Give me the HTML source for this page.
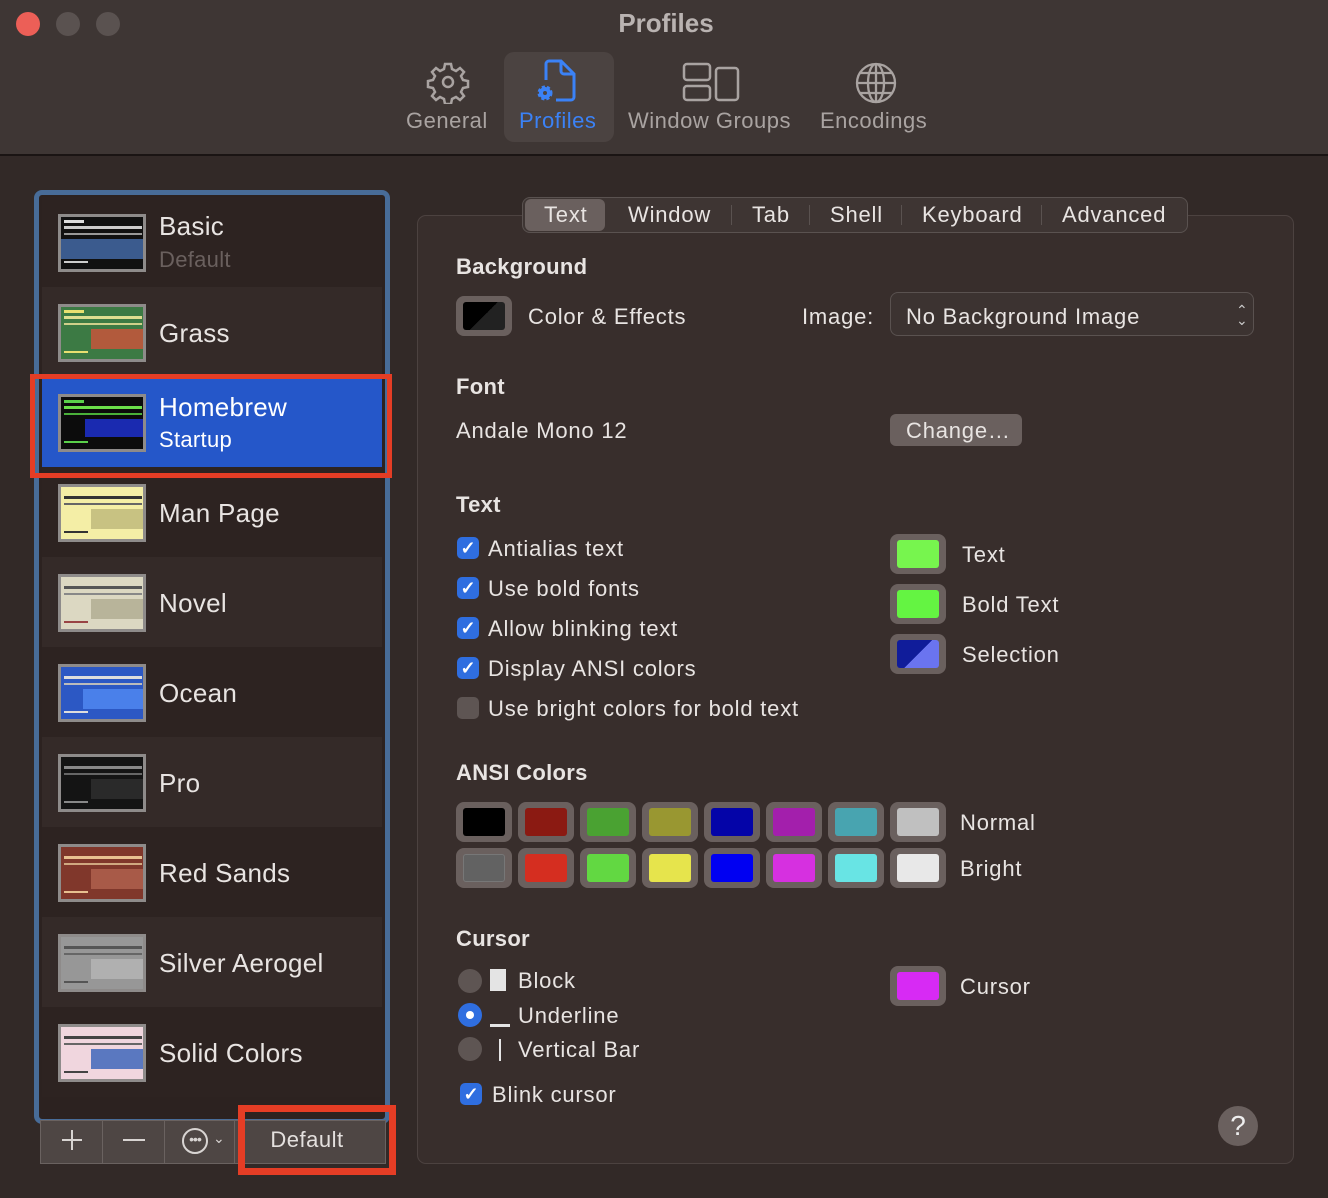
<!DOCTYPE html>
<html><head><meta charset="utf-8"><style>
*{margin:0;padding:0;box-sizing:border-box}
body{width:1328px;height:1198px;background:#322927;font-family:"Liberation Sans",sans-serif;position:relative;overflow:hidden;color:#e6e2e0}
.a{position:absolute}
.title{background:#3e3634;left:0;top:0;width:1328px;height:156px;border-bottom:2px solid #1a1413}
.tb{color:#a9a3a1;font-size:22px;letter-spacing:0.5px}
.row{position:absolute;left:42px;width:340px;height:90px}
.th{position:absolute;left:16px;top:17px;width:88px;height:58px;border:3px solid #8e8b8a;overflow:hidden}
.th i{position:absolute;display:block}
.nm{position:absolute;left:117px;font-size:26px;color:#e8e4e2;letter-spacing:0.3px}
.h{font-weight:bold;font-size:22px;color:#e8e4e2;letter-spacing:0.3px}
.t22{font-size:22px;color:#e8e4e2;letter-spacing:0.8px}
.cb{position:absolute;width:22px;height:22px;border-radius:5px;background:#2f6ee0;color:#fff;font-size:18px;text-align:center;line-height:22px;font-weight:bold}
.sw{position:absolute;width:56px;height:40px;border-radius:8px;background:#6a605e;padding:6px 7px}
.sw div{width:100%;height:100%;border-radius:3px}
.rad{position:absolute;width:24px;height:24px;border-radius:50%;background:#5e5553}
</style></head><body>
<div class="a title"></div>
<div class="a" style="left:16px;top:12px;width:24px;height:24px;border-radius:50%;background:#ec5f57"></div>
<div class="a" style="left:56px;top:12px;width:24px;height:24px;border-radius:50%;background:#5a5250"></div>
<div class="a" style="left:96px;top:12px;width:24px;height:24px;border-radius:50%;background:#5a5250"></div>
<div class="a" style="left:0;top:8px;width:1332px;text-align:center;font-weight:bold;font-size:26px;color:#b9b3b1">Profiles</div>
<div class="a" style="left:504px;top:52px;width:110px;height:90px;border-radius:10px;background:#4b4341"></div>
<svg class="a" style="left:426px;top:60px" width="44" height="44" viewBox="0 0 44 44" fill="none" stroke="#a9a3a1" stroke-width="2.5"><path d="M19 4h6l1 5 4 2 4-3 4 4-3 4 2 4 5 1v6l-5 1-2 4 3 4-4 4-4-3-4 2-1 5h-6l-1-5-4-2-4 3-4-4 3-4-2-4-5-1v-6l5-1 2-4-3-4 4-4 4 3 4-2z"/><circle cx="22" cy="22" r="5"/></svg>
<svg class="a" style="left:532px;top:58px" width="48" height="48" viewBox="0 0 48 48" fill="none" stroke="#3b82f6" stroke-width="3"><path d="M14 22V6a3 3 0 0 1 3-3h12l13 13v23a3 3 0 0 1-3 3H24"/><path d="M29 3v10a3 3 0 0 0 3 3h10"/><circle cx="13" cy="35" r="6" fill="#3b82f6" stroke-width="3" stroke-dasharray="3 2"/><circle cx="13" cy="35" r="2" fill="#4b4341" stroke="none"/></svg>
<svg class="a" style="left:682px;top:62px" width="58" height="40" viewBox="0 0 58 40" fill="none" stroke="#a9a3a1" stroke-width="2.5"><rect x="2" y="2" width="26" height="16" rx="3"/><rect x="2" y="24" width="26" height="14" rx="3"/><rect x="34" y="6" width="22" height="32" rx="3"/></svg>
<svg class="a" style="left:854px;top:61px" width="44" height="44" viewBox="0 0 44 44" fill="none" stroke="#a9a3a1" stroke-width="2.3"><circle cx="22" cy="22" r="19"/><ellipse cx="22" cy="22" rx="8" ry="19"/><path d="M22 3v38M3 22h38M6 12h32M6 32h32"/></svg>
<div class="a tb" style="left:406px;top:108px">General</div>
<div class="a tb" style="left:519px;top:108px;color:#3b82f6">Profiles</div>
<div class="a tb" style="left:628px;top:108px">Window Groups</div>
<div class="a tb" style="left:820px;top:108px">Encodings</div>

<!-- list -->
<div class="a" style="left:34px;top:190px;width:356px;height:934px;border:5px solid #486c98;border-radius:8px;background:#2c2220"></div>
<div class="row" style="top:197px;background:#2d2321"><div class="th" style="background:#111"><i style="left:0;top:22px;width:82px;height:20px;background:#3b5b8e"></i><i style="left:3px;top:3px;width:20px;height:3px;background:#ddd"></i><i style="left:3px;top:9px;width:78px;height:3px;background:#ccc"></i><i style="left:3px;top:16px;width:78px;height:2px;background:#999"></i><i style="left:3px;top:44px;width:24px;height:2px;background:#ccc"></i></div><div class="nm" style="top:14px">Basic</div><div class="nm" style="top:50px;font-size:22px;color:#6a605e">Default</div></div>
<div class="row" style="top:287px;background:#342a28"><div class="th" style="background:#3c7a44"><i style="left:30px;top:22px;width:52px;height:20px;background:#b25a3c"></i><i style="left:3px;top:3px;width:20px;height:3px;background:#e8e070"></i><i style="left:3px;top:9px;width:78px;height:3px;background:#dede90"></i><i style="left:3px;top:16px;width:78px;height:2px;background:#cfd08a"></i><i style="left:3px;top:44px;width:24px;height:2px;background:#e8e070"></i></div><div class="nm" style="top:31px">Grass</div></div>
<div class="row" style="top:377px;background:#2557c9"><div class="th" style="background:#0c0c0c"><i style="left:24px;top:22px;width:58px;height:18px;background:#1a2ab0"></i><i style="left:3px;top:3px;width:20px;height:3px;background:#5ad04a"></i><i style="left:3px;top:9px;width:78px;height:3px;background:#6be04a"></i><i style="left:3px;top:16px;width:78px;height:2px;background:#4ab03a"></i><i style="left:3px;top:44px;width:24px;height:2px;background:#5ad04a"></i></div><div class="nm" style="top:15px;color:#fff">Homebrew</div><div class="nm" style="top:50px;font-size:22px;color:#fff">Startup</div></div>
<div class="row" style="top:467px;background:#2d2321"><div class="th" style="background:#f4eea6"><i style="left:30px;top:22px;width:52px;height:20px;background:#c8c282"></i><i style="left:3px;top:9px;width:78px;height:3px;background:#333"></i><i style="left:3px;top:16px;width:78px;height:2px;background:#666"></i><i style="left:3px;top:44px;width:24px;height:2px;background:#333"></i></div><div class="nm" style="top:31px">Man Page</div></div>
<div class="row" style="top:557px;background:#342a28"><div class="th" style="background:#dcd8c2"><i style="left:30px;top:22px;width:52px;height:20px;background:#b8b49a"></i><i style="left:3px;top:9px;width:78px;height:3px;background:#555"></i><i style="left:3px;top:16px;width:78px;height:2px;background:#888"></i><i style="left:3px;top:44px;width:24px;height:2px;background:#944"></i></div><div class="nm" style="top:31px">Novel</div></div>
<div class="row" style="top:647px;background:#2d2321"><div class="th" style="background:#2c58c4"><i style="left:22px;top:22px;width:60px;height:20px;background:#4a80ea"></i><i style="left:3px;top:9px;width:78px;height:3px;background:#ddd"></i><i style="left:3px;top:16px;width:78px;height:2px;background:#bbb"></i><i style="left:3px;top:44px;width:24px;height:2px;background:#ddd"></i></div><div class="nm" style="top:31px">Ocean</div></div>
<div class="row" style="top:737px;background:#342a28"><div class="th" style="background:#141414"><i style="left:30px;top:22px;width:52px;height:20px;background:#2a2a2a"></i><i style="left:3px;top:9px;width:78px;height:3px;background:#888"></i><i style="left:3px;top:16px;width:78px;height:2px;background:#666"></i><i style="left:3px;top:44px;width:24px;height:2px;background:#888"></i></div><div class="nm" style="top:31px">Pro</div></div>
<div class="row" style="top:827px;background:#2d2321"><div class="th" style="background:#80372b"><i style="left:30px;top:22px;width:52px;height:20px;background:#a85a48"></i><i style="left:3px;top:9px;width:78px;height:3px;background:#e8c090"></i><i style="left:3px;top:16px;width:78px;height:2px;background:#d0a880"></i><i style="left:3px;top:44px;width:24px;height:2px;background:#e8c090"></i></div><div class="nm" style="top:31px">Red Sands</div></div>
<div class="row" style="top:917px;background:#342a28"><div class="th" style="background:#979797"><i style="left:30px;top:22px;width:52px;height:20px;background:#b0b0b0"></i><i style="left:3px;top:9px;width:78px;height:3px;background:#555"></i><i style="left:3px;top:16px;width:78px;height:2px;background:#666"></i><i style="left:3px;top:44px;width:24px;height:2px;background:#555"></i></div><div class="nm" style="top:31px">Silver Aerogel</div></div>
<div class="row" style="top:1007px;background:#2d2321"><div class="th" style="background:#f0d6de"><i style="left:30px;top:22px;width:52px;height:20px;background:#5a78c0"></i><i style="left:3px;top:9px;width:78px;height:3px;background:#444"></i><i style="left:3px;top:16px;width:78px;height:2px;background:#666"></i><i style="left:3px;top:44px;width:24px;height:2px;background:#444"></i></div><div class="nm" style="top:31px">Solid Colors</div></div>
<div class="a" style="left:30px;top:374px;width:362px;height:104px;border:5px solid #e53d25"></div>

<!-- bottom bar -->
<div class="a" style="left:40px;top:1120px;width:346px;height:44px;background:#4e4644;border:1px solid #6a6260"></div>
<div class="a" style="left:102px;top:1120px;width:1px;height:44px;background:#6a6260"></div>
<div class="a" style="left:164px;top:1120px;width:1px;height:44px;background:#6a6260"></div>
<div class="a" style="left:234px;top:1120px;width:1px;height:44px;background:#6a6260"></div>
<div class="a" style="left:62px;top:1139px;width:20px;height:2px;background:#d8d4d2"></div>
<div class="a" style="left:71px;top:1130px;width:2px;height:20px;background:#d8d4d2"></div>
<div class="a" style="left:123px;top:1139px;width:22px;height:2px;background:#d8d4d2"></div>
<div class="a" style="left:182px;top:1128px;width:26px;height:26px;border:2px solid #d8d4d2;border-radius:50%;font-size:14px;text-align:center;line-height:18px;color:#d8d4d2;letter-spacing:-1px">•••</div>
<div class="a" style="left:213px;top:1130px;font-size:14px;color:#d8d4d2">⌄</div>
<div class="a" style="left:242px;top:1127px;width:130px;text-align:center;font-size:22px;color:#e4e0de;letter-spacing:0.5px">Default</div>
<div class="a" style="left:238px;top:1105px;width:158px;height:70px;border:7px solid #e53d25"></div>

<!-- right panel -->
<div class="a" style="left:417px;top:215px;width:877px;height:949px;background:#382e2c;border:1px solid #4c4240;border-radius:9px"></div>
<div class="a" style="left:522px;top:197px;width:666px;height:36px;background:#3e3533;border:1px solid #5a5250;border-radius:8px"></div>
<div class="a" style="left:525px;top:199px;width:80px;height:32px;background:#6a605e;border-radius:6px"></div>
<div class="a t22" style="left:544px;top:202px">Text</div>
<div class="a t22" style="left:628px;top:202px">Window</div>
<div class="a t22" style="left:752px;top:202px">Tab</div>
<div class="a t22" style="left:830px;top:202px">Shell</div>
<div class="a t22" style="left:922px;top:202px">Keyboard</div>
<div class="a t22" style="left:1062px;top:202px">Advanced</div>
<div class="a" style="left:731px;top:205px;width:1px;height:20px;background:#5a5250"></div>
<div class="a" style="left:809px;top:205px;width:1px;height:20px;background:#5a5250"></div>
<div class="a" style="left:901px;top:205px;width:1px;height:20px;background:#5a5250"></div>
<div class="a" style="left:1041px;top:205px;width:1px;height:20px;background:#5a5250"></div>

<div class="a h" style="left:456px;top:254px">Background</div>
<div class="sw" style="left:456px;top:296px;"><div style="background:linear-gradient(135deg,#000 50%,#222 50%)"></div></div>
<div class="a t22" style="left:528px;top:304px">Color &amp; Effects</div>
<div class="a t22" style="left:802px;top:304px">Image:</div>
<div class="a" style="left:890px;top:292px;width:364px;height:44px;border:1px solid #5a5250;border-radius:8px;background:#3c3331"></div>
<div class="a t22" style="left:906px;top:304px">No Background Image</div>
<div class="a" style="left:1236px;top:305px;font-size:14px;line-height:10px;color:#ccc">⌃<br>⌄</div>

<div class="a h" style="left:456px;top:374px">Font</div>
<div class="a t22" style="left:456px;top:418px">Andale Mono 12</div>
<div class="a" style="left:890px;top:414px;width:132px;height:32px;background:#6a605e;border-radius:6px"></div>
<div class="a t22" style="left:906px;top:418px">Change…</div>

<div class="a h" style="left:456px;top:492px">Text</div>
<div class="cb" style="left:457px;top:537px">✓</div><div class="a t22" style="left:488px;top:536px">Antialias text</div>
<div class="cb" style="left:457px;top:577px">✓</div><div class="a t22" style="left:488px;top:576px">Use bold fonts</div>
<div class="cb" style="left:457px;top:617px">✓</div><div class="a t22" style="left:488px;top:616px">Allow blinking text</div>
<div class="cb" style="left:457px;top:657px">✓</div><div class="a t22" style="left:488px;top:656px">Display ANSI colors</div>
<div class="cb" style="left:457px;top:697px;background:#5e5553"></div><div class="a t22" style="left:488px;top:696px">Use bright colors for bold text</div>
<div class="sw" style="left:890px;top:534px"><div style="background:#77f54e"></div></div><div class="a t22" style="left:962px;top:542px">Text</div>
<div class="sw" style="left:890px;top:584px"><div style="background:#64f442"></div></div><div class="a t22" style="left:962px;top:592px">Bold Text</div>
<div class="sw" style="left:890px;top:634px"><div style="background:linear-gradient(135deg,#101c9a 50%,#6a74f0 50%)"></div></div><div class="a t22" style="left:962px;top:642px">Selection</div>

<div class="a h" style="left:456px;top:760px">ANSI Colors</div>
<div class="sw" style="left:456px;top:802px"><div style="background:#000"></div></div>
<div class="sw" style="left:518px;top:802px"><div style="background:#8b1a12"></div></div>
<div class="sw" style="left:580px;top:802px"><div style="background:#4aa232"></div></div>
<div class="sw" style="left:642px;top:802px"><div style="background:#999731"></div></div>
<div class="sw" style="left:704px;top:802px"><div style="background:#0404a8"></div></div>
<div class="sw" style="left:766px;top:802px"><div style="background:#a31fac"></div></div>
<div class="sw" style="left:828px;top:802px"><div style="background:#48a4b0"></div></div>
<div class="sw" style="left:890px;top:802px"><div style="background:#c0c0c0"></div></div>
<div class="a t22" style="left:960px;top:810px">Normal</div>
<div class="sw" style="left:456px;top:848px"><div style="background:#626262;border:1px solid #777"></div></div>
<div class="sw" style="left:518px;top:848px"><div style="background:#d52e20"></div></div>
<div class="sw" style="left:580px;top:848px"><div style="background:#62d842"></div></div>
<div class="sw" style="left:642px;top:848px"><div style="background:#e6e44c"></div></div>
<div class="sw" style="left:704px;top:848px"><div style="background:#0000f2"></div></div>
<div class="sw" style="left:766px;top:848px"><div style="background:#d630e0"></div></div>
<div class="sw" style="left:828px;top:848px"><div style="background:#68e4e4"></div></div>
<div class="sw" style="left:890px;top:848px"><div style="background:#e8e8e8"></div></div>
<div class="a t22" style="left:960px;top:856px">Bright</div>

<div class="a h" style="left:456px;top:926px">Cursor</div>
<div class="rad" style="left:458px;top:969px"></div><div class="a" style="left:490px;top:969px;width:16px;height:22px;background:#e4e4e4"></div><div class="a t22" style="left:518px;top:968px">Block</div>
<div class="rad" style="left:458px;top:1003px;background:#2f6ee0"></div><div class="a" style="left:466px;top:1011px;width:8px;height:8px;border-radius:50%;background:#fff"></div><div class="a" style="left:490px;top:1024px;width:20px;height:3px;background:#e4e4e4"></div><div class="a t22" style="left:518px;top:1003px">Underline</div>
<div class="rad" style="left:458px;top:1037px"></div><div class="a" style="left:499px;top:1039px;width:2px;height:22px;background:#e4e4e4"></div><div class="a t22" style="left:518px;top:1037px">Vertical Bar</div>
<div class="cb" style="left:460px;top:1083px">✓</div><div class="a t22" style="left:492px;top:1082px">Blink cursor</div>
<div class="sw" style="left:890px;top:966px"><div style="background:#d72af4"></div></div><div class="a t22" style="left:960px;top:974px">Cursor</div>
<div class="a" style="left:1218px;top:1106px;width:40px;height:40px;border-radius:50%;background:#6a605e;color:#eee;font-size:28px;text-align:center;line-height:40px">?</div>
</body></html>
